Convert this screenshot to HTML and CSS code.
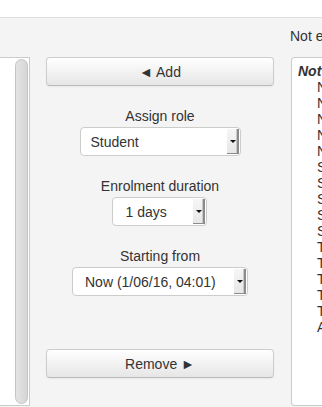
FILE: index.html
```html
<!DOCTYPE html>
<html lang="en">
<head>
    <meta charset="UTF-8">
    <meta name="viewport" content="width=device-width, initial-scale=1.0">
    <title>Enrol users</title>
    <link rel="stylesheet" href="styles.css">
</head>
<body>
    <div class="topbar"></div>
    <div class="enrol">
        <div class="caption">Not enrolled users</div>
        <div class="listbox listbox-current">
            <div class="scrollbar"><div class="thumb"></div></div>
        </div>
        <div class="actions">
            <button class="btn" type="button">&#9668; Add</button>
            <div class="field">
                <label>Assign role</label>
                <div class="select select-role"><span>Student</span><i class="select-arrow"></i></div>
            </div>
            <div class="field">
                <label>Enrolment duration</label>
                <div class="select select-duration"><span>1 days</span><i class="select-arrow"></i></div>
            </div>
            <div class="field">
                <label>Starting from</label>
                <div class="select select-start"><span>Now (1/06/16, 04:01)</span><i class="select-arrow"></i></div>
            </div>
            <button class="btn btn-remove" type="button">Remove &#9658;</button>
        </div>
        <div class="listbox listbox-available">
            <div class="optgroup">Not enrolled users (16)</div>
            <div class="option">Nadia Roberts</div>
            <div class="option">Nathan Ford</div>
            <div class="option">Neil Parker</div>
            <div class="option">Nina Walsh</div>
            <div class="option">Noah Bennett</div>
            <div class="option">Sam Carter</div>
            <div class="option">Sara Hughes</div>
            <div class="option">Sean Doyle</div>
            <div class="option">Sofia Lopez</div>
            <div class="option">Steven Ward</div>
            <div class="option">Tara Mills</div>
            <div class="option">Theo Grant</div>
            <div class="option">Thomas Reid</div>
            <div class="option">Tina Marsh</div>
            <div class="option">Tom Fisher</div>
            <div class="option">Amy Collins</div>
        </div>
    </div>
</body>
</html>
```

FILE: styles.css
```css
body {
    font-family: "Liberation Sans", Arial, sans-serif;
    font-size: 14px;
    color: #333;
    background: #f4f4f4;
    margin: 0;
    height: 100vh;
    overflow: hidden;
}
.topbar {
    height: 17px;
    background: #fff;
    border-bottom: 1px solid #ddd;
}
.enrol {
    display: grid;
    grid-template-columns: 30px 228px 1fr;
    grid-template-rows: 39px 349px;
    column-gap: 16px;
}
.caption {
    grid-column: 3;
    grid-row: 1;
    padding-top: 8px;
    line-height: 20px;
    white-space: nowrap;
}
.listbox {
    grid-row: 2;
    background: #fff;
    border: 1px solid #ccc;
    box-sizing: border-box;
    overflow: hidden;
}
.listbox-current {
    grid-column: 1;
    border-left: none;
    display: flex;
    justify-content: flex-end;
    padding: 1px 1px 1px 0;
}
.scrollbar {
    width: 13px;
    display: flex;
}
.thumb {
    flex: 1;
    border: 1px solid #c4c4c4;
    border-radius: 7px;
    background: linear-gradient(to right, #e4e4e4, #d6d6d6);
}
.actions {
    grid-column: 2;
    grid-row: 2;
    display: flex;
    flex-direction: column;
    align-items: center;
}
.btn {
    width: 100%;
    height: 29px;
    font-family: inherit;
    font-size: 14px;
    color: #333;
    border: 1px solid #ccc;
    border-bottom-color: #bbb;
    border-radius: 4px;
    background: linear-gradient(#fff, #e6e6e6);
    box-shadow: inset 0 1px 0 rgba(255,255,255,0.2), 0 1px 2px rgba(0,0,0,0.05);
    padding: 0;
}
.btn-remove {
    margin-top: 53px;
}
.field {
    margin-top: 20px;
    display: flex;
    flex-direction: column;
    align-items: center;
}
.field label {
    line-height: 20px;
    margin-bottom: 1px;
}
.select {
    height: 29px;
    box-sizing: border-box;
    display: flex;
    align-items: center;
    background: #fff;
    border: 1px solid #ccc;
    border-radius: 4px;
    padding-left: 10px;
    white-space: nowrap;
}
.select span {
    flex: 1;
}
.select-role {
    width: 161px;
}
.select-duration {
    width: 95px;
    padding-left: 12px;
}
.select-start {
    width: 176px;
    padding-left: 12px;
}
.select-arrow {
    position: relative;
    align-self: stretch;
    width: 12px;
    margin: 1px 1px 1px 0;
    background: linear-gradient(#f6f6f6, #e6e6e6);
    box-shadow: inset -2px -1px 0 #8c8c8c, inset -3px 0 0 #c8c8c8;
}
.select-arrow::after {
    content: "";
    position: absolute;
    left: 3px;
    top: 11px;
    border-left: 3px solid transparent;
    border-right: 3px solid transparent;
    border-top: 3px solid #111;
}
.listbox-available {
    grid-column: 3;
    margin-left: 1px;
    border-radius: 4px 0 0 4px;
    border-right: none;
    padding: 5px 0 0 6px;
    white-space: nowrap;
    line-height: 16px;
}
.optgroup {
    font-weight: bold;
    font-style: italic;
}
.option {
    padding-left: 19px;
}
```
